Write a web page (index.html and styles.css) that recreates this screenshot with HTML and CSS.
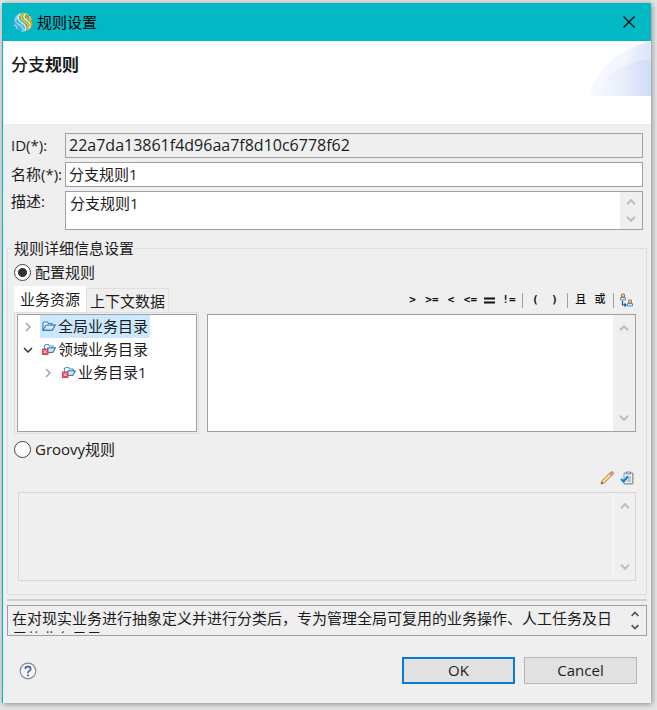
FILE: index.html
```html
<!DOCTYPE html>
<html lang="zh-CN">
<head>
<meta charset="utf-8">
<title>规则设置</title>
<link rel="stylesheet" href="styles.css">
</head>
<body>
<svg class="defs" width="0" height="0" aria-hidden="true">
  <defs>
    <linearGradient id="folder-fill" x1="0" y1="0" x2="0" y2="1"><stop offset="0" stop-color="#f4fbff"/><stop offset="1" stop-color="#a9d3ef"/></linearGradient>
    <symbol id="up" viewBox="0 0 12 8"><path d="M2 6.2 6 2.2 10 6.2" fill="none" stroke="currentColor" stroke-width="2"/></symbol>
    <symbol id="down" viewBox="0 0 12 8"><path d="M2 1.8 6 5.8 10 1.8" fill="none" stroke="currentColor" stroke-width="2"/></symbol>
    <symbol id="folder" viewBox="0 0 14 12"><path d="M1 10V3L2 2h3.500l1 1.500H10V5" fill="#fff" stroke="#3480bd" stroke-width="1.200"/><path d="M1 10.300 4 5.200h9.200L10.200 10.300Z" fill="url(#folder-fill)" stroke="#3480bd" stroke-width="1.200"/></symbol>
    <symbol id="folder-error" viewBox="0 0 14 12"><path d="M2.500 9V2.500L4 1.500h2.500L7.500 3H11v2" fill="#fff" stroke="#4b96cd" stroke-width="1.200"/><path d="M3.500 9.500 6 4.800h7.400L10.800 9.500Z" fill="url(#folder-fill)" stroke="#3480bd" stroke-width="1.200"/><path d="M0 5.500h6.500V12H0z" fill="#df4454"/><path d="m1.700 7.200 3 3m0-3-3 3" stroke="#fff"/></symbol>
  </defs>
</svg>
<main class="window">
  <header class="titlebar">
    <svg class="logo" viewBox="0 0 20 20" aria-hidden="true">
      <g fill="none" stroke-linecap="round">
        <path d="M4.500 4C1 8 2 10.500 6 12.500S10.500 16.500 9.500 19" stroke="#8fcbf0" stroke-width="2.200"/>
        <path d="M7 2C3.500 6 5 8.500 9 11S13.500 16 12 18.500" stroke="#c9e8fa" stroke-width="1.800"/>
        <path d="M1 9C1.500 13 6 13 6.500 17.500" stroke="#58a7e2" stroke-width="1.800"/>
        <path d="M1.500 13Q4 14.500 4 16.500" stroke="#a5d5f2" stroke-width="1.300"/>
        <path d="M10 1.500C6.500 5 8 7.500 12 10S16 14.500 14.500 17.500" stroke="#f4bd27" stroke-width="2"/>
        <path d="M12.500 1.500C9.500 5 11 6.500 14.500 9S18 13.500 16.500 16" stroke="#fff0a0" stroke-width="1.500"/>
        <path d="M15 2.500C12.500 5 14 6 16.500 8S19 11.500 18 14" stroke="#ed9b26" stroke-width="1.800"/>
        <path d="M17 4.500Q16 6 18 7.500" stroke="#ffd34a" stroke-width="1.500"/>
        <path d="M8.500 2.500C5.500 6 7 8 10.500 10.500S14.500 15.500 13.500 18" stroke="#c98939" stroke-width=".7"/>
      </g>
    </svg>
    <span>规则设置</span>
    <button class="close" type="button" aria-label="关闭"><svg viewBox="0 0 12 12"><path d="m.5.5 11 11m0-11-11 11" stroke="#000" stroke-width="1.200"/></svg></button>
  </header>
  <section class="banner">
    <h1>分支<b>规则</b></h1>
    <svg class="swoosh" viewBox="0 0 62 55" aria-hidden="true">
      <defs><linearGradient id="pale"><stop stop-color="#f9faff"/><stop offset=".6" stop-color="#f1f5fd"/><stop offset="1" stop-color="#dbe5f7"/></linearGradient><linearGradient id="deep"><stop stop-color="#f7f9ff"/><stop offset=".6" stop-color="#e5ebf9"/><stop offset="1" stop-color="#cedbf4"/></linearGradient></defs>
      <path d="M0 55C5 32 28 8 62 0V55Z" fill="url(#pale)"/><path d="M34 30C40 17 51 5 62 0V30Z" fill="#dce6f8" opacity=".25"/><path d="M5 55C14 35 35 21 62 18V55Z" fill="url(#deep)"/>
    </svg>
  </section>
  <form class="content">
    <div class="fields">
      <label for="rule-id">ID(*):</label>
      <input class="box code" id="rule-id" value="22a7da13861f4d96aa7f8d10c6778f62" readonly>
      <label for="rule-name">名称(*):</label>
      <input class="box white" id="rule-name" value="分支规则1">
      <label for="rule-desc">描述:</label>
      <div class="box area desc white"><textarea id="rule-desc">分支规则1</textarea><span class="scroll"><svg><use href="#up"/></svg><svg><use href="#down"/></svg></span></div>
    </div>
    <fieldset class="group">
      <legend>规则详细信息设置</legend>
      <label class="choice"><input type="radio" name="kind" checked>配置规则</label>
      <div class="workspace">
        <div class="resources">
          <div class="tabs" role="tablist"><button class="tab active" type="button" role="tab" aria-selected="true">业务资源</button><button class="tab" type="button" role="tab" aria-selected="false">上下文数据</button></div>
          <div class="panel">
            <ul class="tree">
              <li><div class="node"><svg class="twist" viewBox="0 0 8 10"><path d="m2 1 4 4-4 4"/></svg><span class="item selected"><svg class="folder"><use href="#folder"/></svg>全局业务目录</span></div></li>
              <li><div class="node"><svg class="twist open" viewBox="0 0 10 8"><path d="m1 2 4 4 4-4"/></svg><span class="item"><svg class="folder"><use href="#folder-error"/></svg>领域业务目录</span></div>
                <ul><li><div class="node"><svg class="twist" viewBox="0 0 8 10"><path d="m2 1 4 4-4 4"/></svg><span class="item"><svg class="folder"><use href="#folder-error"/></svg>业务目录1</span></div></li></ul>
              </li>
            </ul>
          </div>
        </div>
        <div class="editor">
          <div class="toolbar">
            <button type="button">&gt;</button><button type="button">&gt;=</button><button type="button">&lt;</button><button type="button">&lt;=</button><button type="button" class="wide" aria-label="="><svg viewBox="0 0 11 7"><path d="M0 1.500h11M0 5.500h11" stroke="#111" stroke-width="2"/></svg></button><button type="button">!=</button><i></i><button type="button">(</button><button type="button">)</button><i></i><button type="button" class="word">且</button><button type="button" class="word">或</button><i></i>
            <button type="button" aria-label="选择人员"><svg class="people" viewBox="0 0 14 14"><g stroke="#4995d2" fill="#d7edfc"><path d="M1.500 7V4.500h5V7ZM8.500 13V10.500h5V13Z"/></g><path d="M2.500 1h3v3h-3zM9.500 7h3v3h-3z" fill="#f1c58c" stroke="#a56b28" stroke-width=".8"/><path d="M3.500 8v4H7M5.500 10.500 7 12 5.500 13.500" fill="none" stroke="#175790" stroke-width="1.200"/></svg></button>
          </div>
          <div class="box area rule white"><textarea aria-label="配置规则"></textarea><span class="scroll"><svg><use href="#up"/></svg><svg><use href="#down"/></svg></span></div>
        </div>
      </div>
      <label class="choice groovy"><input type="radio" name="kind">Groovy规则</label>
      <div class="actions">
        <button type="button" aria-label="编辑"><svg viewBox="0 0 14 14"><path d="M1 13 2.200 9.500 9.500 2.200 11.800 4.500 4.500 11.800Z" fill="#f3ca7b" stroke="#a7793b" stroke-width=".8"/><path d="M3 11 10.500 3.500" stroke="#fff0bd"/><path d="m9.500 2.200 1-1Q12-.1 13.300 1.300T12.800 3.500l-1 1Z" fill="#d9958e" stroke="#b77c76" stroke-width=".7"/><path d="m1 13 .8-2.200 1.400 1.400Z" fill="#514437"/></svg></button>
        <button type="button" aria-label="校验"><svg viewBox="0 0 14 14"><path d="M4 2h9v11H4z" fill="#e7f1fd" stroke="#7895b8"/><path d="M12.500 2v10.500H4" fill="none" stroke="#ba9b62"/><path d="M6.500 3V1h4v2Z" fill="#dce7f5" stroke="#7188a8"/><path d="M6 6h5M8 8h3M7 10h4" stroke="#799dca"/><path d="m1 8 2.500 2.500L8 5.500" fill="none" stroke="#1879d0" stroke-width="2"/></svg></button>
      </div>
      <div class="box area script"><textarea aria-label="Groovy规则" disabled></textarea><span class="scroll"><svg><use href="#up"/></svg><svg><use href="#down"/></svg></span></div>
    </fieldset>
    <hr>
    <div class="box area help-text"><textarea aria-label="说明" readonly>在对现实业务进行抽象定义并进行分类后，专为管理全局可复用的业务操作、人工任务及日用的业务目录</textarea><span class="scroll"><svg><use href="#up"/></svg><svg><use href="#down"/></svg></span></div>
    <footer>
      <button class="help" type="button" aria-label="帮助"><svg viewBox="0 0 18 18"><circle cx="9" cy="9" r="7.800" fill="#f6f7fa" stroke="#7e8ba5" stroke-width="1.200"/><path d="M6.300 7Q6.300 4.500 9 4.500T11.700 7Q11.700 8.200 10.200 9T9 11.300" fill="none" stroke="#5c6d8e" stroke-width="1.800"/><path d="M8 12.500h2v1.800H8z" fill="#5c6d8e"/></svg></button>
      <button class="command primary" type="button">OK</button>
      <button class="command" type="button">Cancel</button>
    </footer>
  </form>
</main>
</body>
</html>
```
FILE: styles.css
```css
* { box-sizing: border-box; }
body {
  margin: 0;
  min-height: 100vh;
  padding: 3px 6px 7px 2px;
  display: flex;
  background: #e6e6e6;
  color: #1c1c1c;
  font: 15px/20px "Open Sans", "Noto Sans CJK SC", sans-serif;
}
button, input, textarea { font: inherit; color: inherit; }
button { padding: 0; border: 0; background: none; }
svg { display: block; flex: none; }
.defs { position: absolute; }
.window {
  flex: 1;
  min-width: 0;
  border-left: 1px solid #02b8c5;
  background: #efefef;
  box-shadow: 1px 1px 6px #888;
}
.titlebar {
  height: 38px;
  padding: 0 16px 0 10px;
  display: flex;
  align-items: center;
  gap: 4px;
  background: #02b8c5;
  color: #000;
}
.logo { width: 20px; height: 20px; }
.close { margin-left: auto; }
.close svg { width: 12px; height: 12px; }
.banner {
  height: 83px;
  display: flex;
  justify-content: space-between;
  background: #fff;
}
h1 { margin: 12px 8px; font-size: 17px; line-height: 24px; font-weight: 500; }
h1 b { font-weight: 700; }
.swoosh { width: 62px; height: 55px; }
.content { padding: 9px 4px 0; }
.fields {
  padding: 0 4px;
  display: grid;
  grid-template-columns: 54px minmax(0, 1fr);
  row-gap: 4px;
}
.fields label { white-space: nowrap; line-height: 25px; }
.fields label[for="rule-desc"] { line-height: 20px; }
.box { border: 1px solid #a0a0a0; background: #efefef; }
.white { background: #fff; }
input.box { width: 100%; height: 25px; padding: 0 3px 2px; outline: 0; }
input.code { font-size: 16px; }
.area { display: flex; }
.area textarea {
  flex: 1;
  min-width: 0;
  padding: 1px 4px;
  border: 0;
  outline: 0;
  resize: none;
  overflow: hidden;
  background: transparent;
}
.scroll {
  width: 22px;
  padding: 6px 0;
  display: flex;
  flex-direction: column;
  justify-content: space-between;
  align-items: center;
  background: #efefef;
  color: #bdbdbd;
}
.scroll svg { width: 12px; height: 8px; }
.desc { height: 39px; }
.group {
  min-width: 0;
  margin: 8px 0 0;
  padding: 0 10px 13px 6px;
  border: 1px solid #dfdfdf;
}
legend { padding: 0; line-height: 20px; }
.choice { height: 28px; display: flex; align-items: center; gap: 4px; }
.choice input {
  appearance: none;
  width: 17px;
  height: 17px;
  margin: 0;
  border: 1px solid #444;
  border-radius: 50%;
  background: #fff;
}
.choice input:checked { background: radial-gradient(circle, #333 4px, #fff 5px); }
.workspace { display: flex; gap: 8px; }
.resources { width: 185px; flex: none; }
.tabs { height: 26px; display: flex; align-items: flex-end; }
.tab { height: 24px; padding: 0 3px; border: 1px solid #dfdfdf; border-bottom: 0; white-space: nowrap; }
.tab.active { height: 26px; padding: 0 5px 2px; border-color: #fff; background: #fff; }
.panel { height: 122px; padding: 1px 1px 1px 2px; border: 1px solid #dfdfdf; }
.tree, .tree ul { margin: 0; padding: 0; list-style: none; }
.tree { height: 118px; border: 1px solid #a0a0a0; background: #fff; }
.tree ul { padding-left: 20px; }
.node { display: flex; align-items: center; gap: 7px; padding-left: 5px; }
.twist { width: 10px; height: 10px; fill: none; stroke: #a6a6a6; stroke-width: 1.5; }
.twist.open { stroke: #333; }
.item { height: 23px; padding: 0 2px 1px; display: flex; align-items: center; gap: 2px; white-space: nowrap; }
.selected { background: #cce8ff; }
.folder { width: 14px; height: 12px; }
.editor { flex: 1; min-width: 0; display: flex; flex-direction: column; }
.toolbar { width: 233px; height: 28px; margin-left: auto; display: flex; align-items: center; }
.toolbar button {
  flex: 1;
  min-width: 0;
  height: 20px;
  display: grid;
  place-items: center;
  font: bold 11px/16px "DejaVu Sans Mono", "Noto Sans CJK SC", monospace;
  color: #111;
}
.toolbar .word { font-weight: 500; }
.toolbar i { width: 1px; height: 15px; margin: 0 3px; background: #a0a0a0; }
.toolbar .wide svg { width: 11px; height: 7px; }
.toolbar .people { width: 14px; height: 14px; }
.rule { height: 118px; }
.rule .scroll, .script .scroll { padding: 9px 0; }
.groovy { margin-top: 1px; height: 28px; }
.actions { height: 29px; padding-right: 2px; display: flex; justify-content: flex-end; align-items: center; gap: 6px; }
.actions svg { width: 14px; height: 14px; }
.script { height: 89px; margin-left: 4px; border-color: #d6d6d6; }
.script .scroll { border-left: 1px solid #f8f8f8; }
hr { height: 2px; margin: 4px 0; border: 0; background: #d0d0d0; }
.help-text { height: 31px; padding-bottom: 2px; }
.help-text textarea { height: 27px; padding: 2px 4px 0; }
.help-text .scroll { padding: 4px 0 2px; color: #555; }
.help-text .scroll svg { width: 10px; }
footer { padding: 21px 10px 17px 12px; display: flex; align-items: center; gap: 9px; }
.help { margin-right: auto; }
.help svg { width: 18px; height: 18px; }
.command { width: 113px; height: 27px; padding-bottom: 2px; border: 1px solid #b5b5b5; background: #e1e1e1; }
.primary { border: 2px solid #0b7bd7; }
```
